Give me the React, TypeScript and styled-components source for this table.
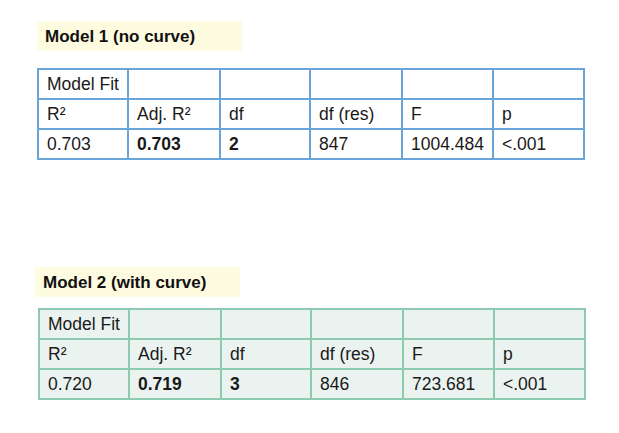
import { createGlobalStyle } from 'styled-components'
import styled from 'styled-components'

const GlobalStyle = createGlobalStyle`
  html, body {
    margin: 0;
    padding: 0;
    background: #ffffff;
  }
  body {
    font-family: "Liberation Sans", Arial, sans-serif;
    color: #1a1a1a;
  }
`

const Page = styled.main`
  width: 619px;
  height: 433px;
  padding: 21px 0 0 37px;
  box-sizing: border-box;
  display: flex;
  flex-direction: column;
  gap: 107px;
`

const Section = styled.section<{ $gap: number; $shift: number }>`
  display: flex;
  flex-direction: column;
  align-items: flex-start;
  gap: ${({ $gap }) => $gap}px;
  margin-left: ${({ $shift }) => $shift}px;
`

const Heading = styled.h2<{ $indent: number }>`
  margin: 0 0 0 ${({ $indent }) => $indent}px;
  width: 205px;
  height: 30px;
  box-sizing: border-box;
  padding: 1px 0 0 8px;
  display: flex;
  align-items: center;
  background: #fdfbe0;
  font-size: 17px;
  font-weight: 700;
  color: #111;
`

const Table = styled.table<{ $fill: string }>`
  border-collapse: collapse;
  table-layout: fixed;
  width: 548px;
  background: ${({ $fill }) => $fill};
`

const Col = styled.col<{ $w: number }>`
  width: ${({ $w }) => $w}px;
`

const Cell = styled.td<{ $bold?: boolean; $line: string }>`
  border: 2px solid ${({ $line }) => $line};
  height: 27px;
  padding: 1px 0 0 8px;
  font-size: 17.5px;
  font-weight: ${({ $bold }) => ($bold ? 700 : 400)};
  color: #1a1a1a;
  white-space: nowrap;
  vertical-align: middle;
`

type Model = {
  title: string
  values: string[]
  line: string
  fill: string
  gap: number
  shift: number
  indent: number
}

const header = ['R²', 'Adj. R²', 'df', 'df (res)', 'F', 'p']
const widths = [90, 92, 90, 92, 91, 91]
const boldCols = [1, 2]

const ModelTable = ({ title, values, line, fill, gap, shift, indent }: Model) => (
  <Section $gap={gap} $shift={shift}>
    <Heading $indent={indent}>{title}</Heading>
    <Table $fill={fill}>
      <colgroup>
        {widths.map((w, i) => (
          <Col key={i} $w={w} />
        ))}
      </colgroup>
      <tbody>
        <tr>
          {widths.map((_, i) => (
            <Cell key={i} $line={line}>
              {i === 0 ? 'Model Fit' : ''}
            </Cell>
          ))}
        </tr>
        <tr>
          {header.map((h) => (
            <Cell key={h} $line={line}>
              {h}
            </Cell>
          ))}
        </tr>
        <tr>
          {values.map((v, i) => (
            <Cell key={i} $line={line} $bold={boldCols.includes(i)}>
              {v}
            </Cell>
          ))}
        </tr>
      </tbody>
    </Table>
  </Section>
)

export default function App() {
  return (
    <>
      <GlobalStyle />
      <Page>
        <ModelTable
          title="Model 1 (no curve)"
          values={['0.703', '0.703', '2', '847', '1004.484', '<.001']}
          line="#6aa5da"
          fill="#ffffff"
          gap={17}
          shift={0}
          indent={0}
        />
        <ModelTable
          title="Model 2 (with curve)"
          values={['0.720', '0.719', '3', '846', '723.681', '<.001']}
          line="#8dcbb1"
          fill="#ebf3f0"
          gap={11}
          shift={1}
          indent={-3}
        />
      </Page>
    </>
  )
}
